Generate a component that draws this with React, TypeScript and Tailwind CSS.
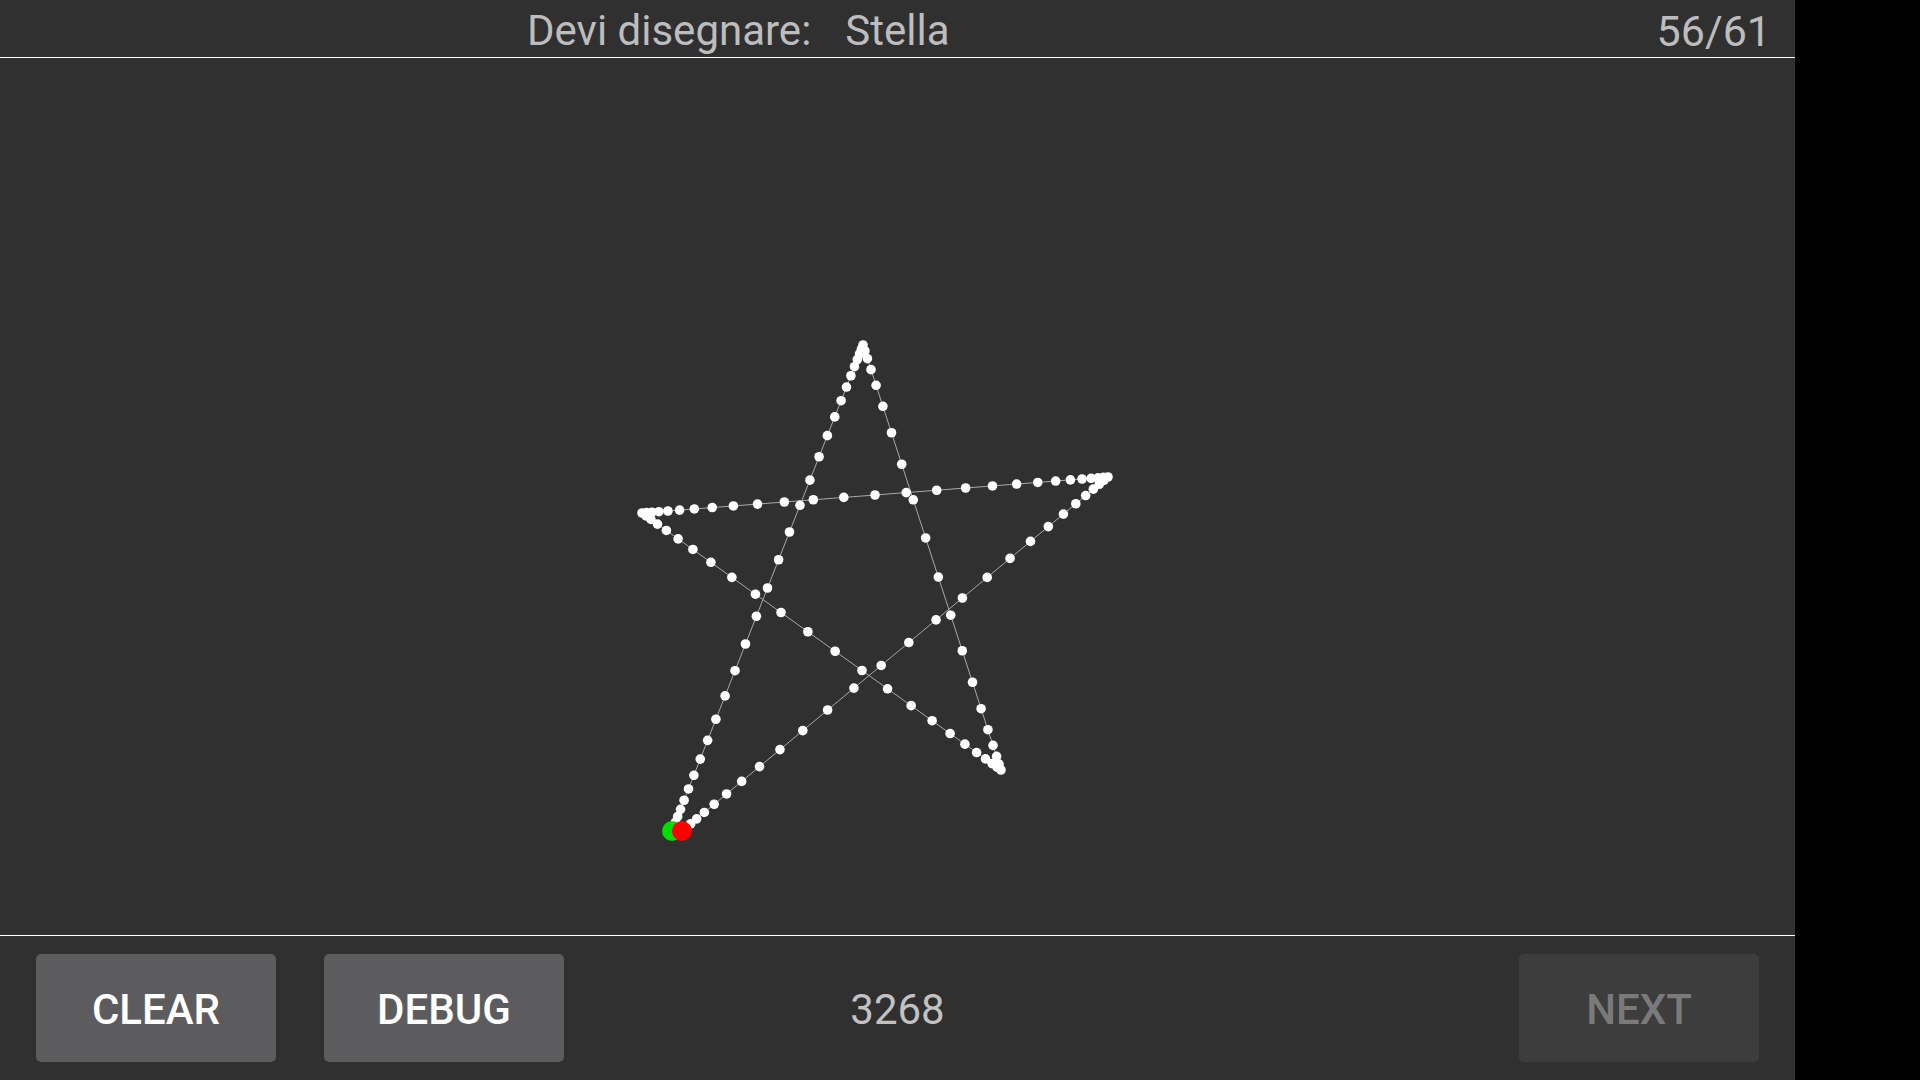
import React from 'react'

type Pt = [number, number]

// vertici del tratto (ordine di disegno)
const STROKE: Pt[] = [
  [672, 773],
  [863, 287],
  [1001, 712],
  [642, 455],
  [1108, 419],
  [682, 773],
]
const COUNTS = [30, 19, 23, 26, 27]

function samplePath(): Pt[] {
  const pts: Pt[] = []
  for (let s = 0; s < STROKE.length - 1; s++) {
    const [x0, y0] = STROKE[s]
    const [x1, y1] = STROKE[s + 1]
    const n = COUNTS[s]
    for (let i = 0; i < n; i++) {
      const u = i / n
      const t = u - (0.75 * Math.sin(2 * Math.PI * u)) / (2 * Math.PI)
      pts.push([x0 + (x1 - x0) * t, y0 + (y1 - y0) * t])
    }
  }
  pts.push(STROKE[STROKE.length - 1])
  return pts
}

function Drawing() {
  const pts = samplePath()
  const start = STROKE[0]
  const end = STROKE[STROKE.length - 1]
  return (
    <svg width="1795" height="876" viewBox="0 0 1795 876" className="block">
      <polyline
        points={pts.map(p => p.join(',')).join(' ')}
        fill="none"
        stroke="#a8a8a8"
        strokeWidth="1"
      />
      {pts.map((p, i) => (
        <circle key={i} cx={p[0]} cy={p[1]} r="4.8" fill="#ffffff" />
      ))}
      <circle cx={start[0]} cy={start[1]} r="10" fill="#00e000" />
      <circle cx={end[0]} cy={end[1]} r="10" fill="#ff0000" />
    </svg>
  )
}

function Button({ label, disabled }: { label: string; disabled?: boolean }) {
  return (
    <button
      className={
        disabled
          ? 'w-[240px] h-[108px] rounded-[5px] bg-[#3d3d3d] text-[#7a7a7a] text-[42px] font-medium leading-none pt-[4px]'
          : 'w-[240px] h-[108px] rounded-[5px] bg-[#5c5c5e] text-white text-[42px] font-medium leading-none pt-[4px]'
      }
    >
      {label}
    </button>
  )
}

export default function App() {
  return (
    <div className="flex w-[1920px] h-[1080px] bg-black overflow-hidden" style={{ fontFamily: 'Roboto, "Noto Sans", sans-serif' }}>
      <div className="flex flex-col w-[1795px] h-full bg-[#303030]">
        {/* intestazione */}
        <div className="flex items-start h-[58px] border-b border-white pt-[10px] text-[42px] leading-none text-[#bdbdbd]">
          <div className="flex gap-[34px] pl-[527px]">
            <span>Devi disegnare:</span>
            <span>Stella</span>
          </div>
          <div className="flex-1" />
          <span className="pr-[24px] text-[43px]">56/61</span>
        </div>

        {/* area di disegno */}
        <div className="flex-1 border-b border-white">
          <Drawing />
        </div>

        {/* barra inferiore */}
        <div className="grid grid-cols-[1fr_auto_1fr] items-start h-[144px] px-[36px] pt-[18px]">
          <div className="flex gap-[48px]">
            <Button label="CLEAR" />
            <Button label="DEBUG" />
          </div>
          <span className="text-[42px] leading-none text-[#c2c2c2] pt-[35px]">3268</span>
          <div className="flex justify-end">
            <Button label="NEXT" disabled />
          </div>
        </div>
      </div>
    </div>
  )
}
